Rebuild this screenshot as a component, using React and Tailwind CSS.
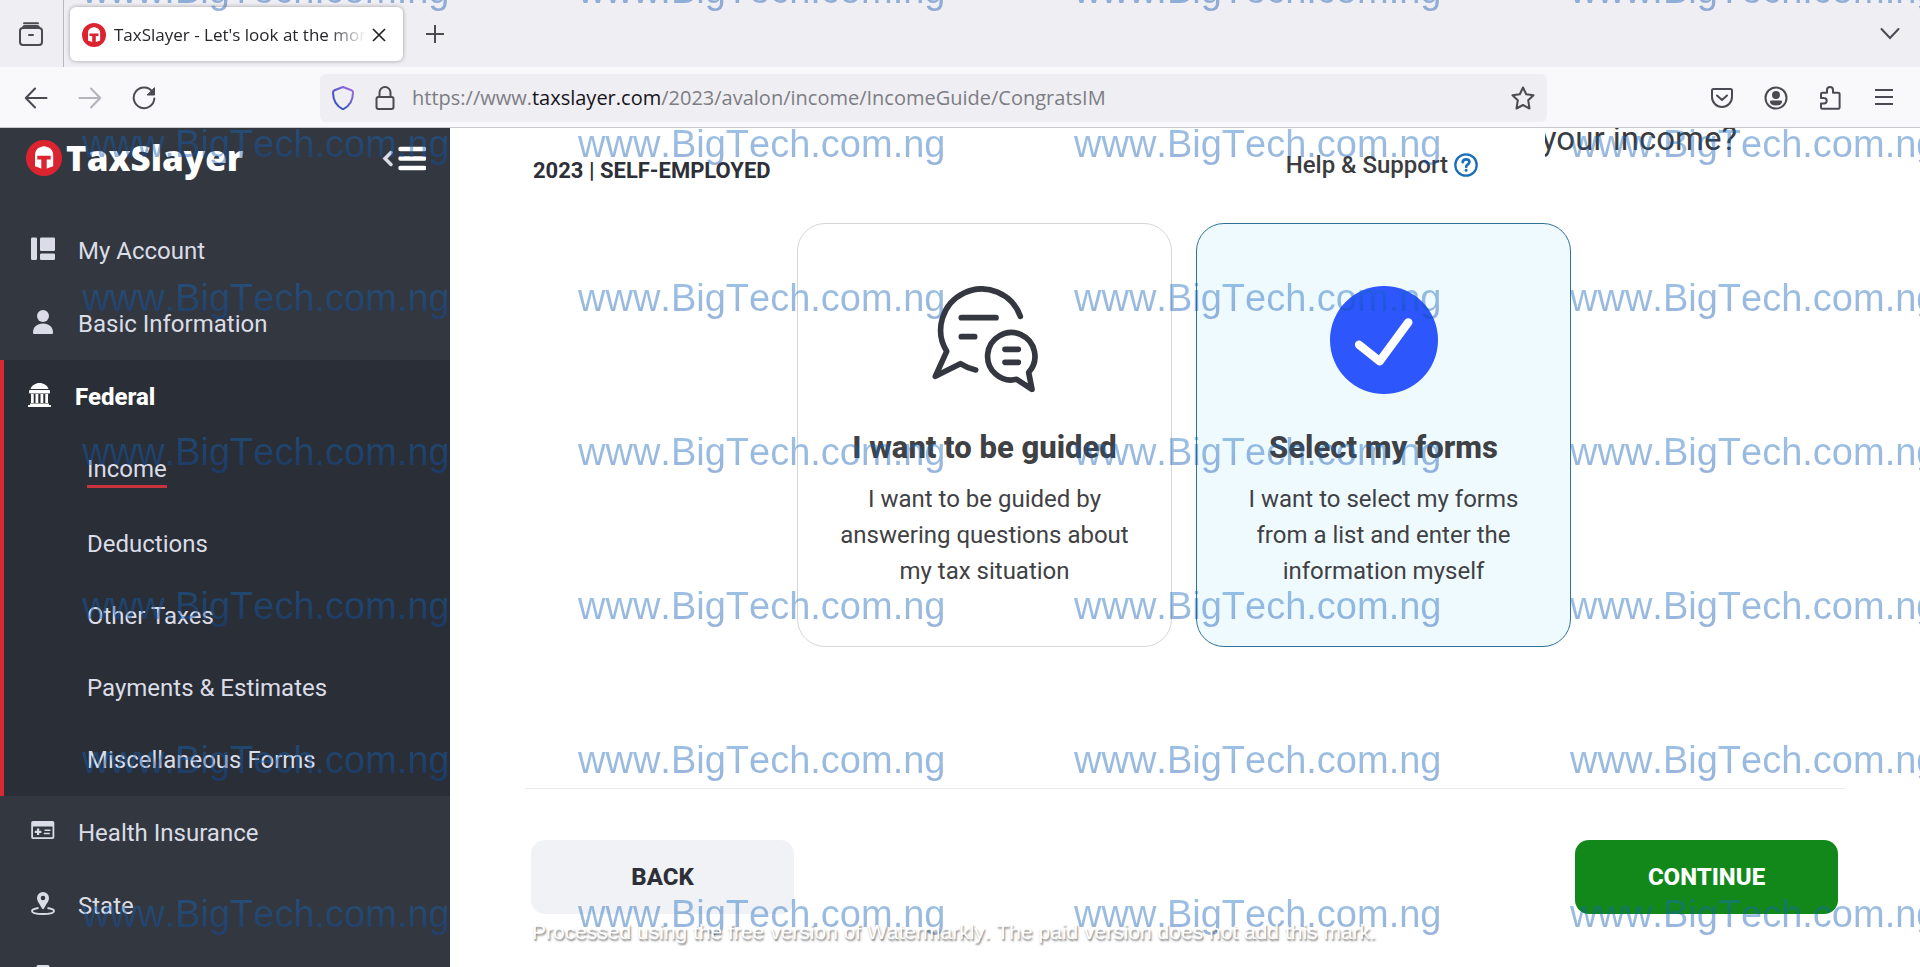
import React from "react";

function Helmet({ className }) {
  return (
    <svg viewBox="0 0 36 36" className={className} aria-hidden="true">
      <circle cx="18" cy="18" r="18" fill="#dc2330" />
      <path d="M9 15C9 11 11 8.500 13.500 7.500L18 6l4.500 1.500C25 8.500 27.200 11 27.200 15v11.300L18 29.500l-9-3.200z" fill="#fff" />
      <path d="M11.300 15.700h13.400v3.700h-4v10.600h-5.400V19.400h-4z" fill="#dc2330" />
    </svg>
  );
}

function Line({ stroke = "#4a4a52", children }) {
  return (
    <svg
      viewBox="0 0 24 24"
      className="size-6"
      fill="none"
      stroke={stroke}
      strokeWidth="2"
      strokeLinecap="round"
      strokeLinejoin="round"
      aria-hidden="true"
    >
      {children}
    </svg>
  );
}

function TabStrip() {
  return (
    <div className="flex h-[67px] shrink-0 items-stretch bg-[#efeef3]">
      <button aria-label="Recent tabs" className="flex w-[63px] items-center justify-center pr-0.5">
        <Line>
          <path d="M5 1.200h14" />
          <rect x="1" y="6" width="22" height="17" rx="3" />
          <path d="M4 6c0-1.500.5-2 2-2h12c1.500 0 2 .5 2 2M10 13h4" />
        </Line>
      </button>
      <div className="w-px bg-[#b9b8be]" />
      <div className="mt-[7px] mb-[6px] ml-[6px] flex w-[333px] items-center rounded-md bg-white pt-px pr-[17px] pl-3 shadow-[0_0_4px_rgba(0,0,0,0.35)]">
        <Helmet className="size-6 shrink-0" />
        <span className="ml-2 flex-1 overflow-hidden text-[17px] whitespace-nowrap text-[#26262b] [mask-image:linear-gradient(to_right,black_85%,transparent)]">
          TaxSlayer - Let&apos;s look at the money
        </span>
        <button aria-label="Close tab" className="ml-1.5">
          <svg viewBox="0 0 14 14" className="size-[14px]" stroke="#222" strokeWidth="1.700" aria-hidden="true">
            <path d="M1 1l12 12M13 1L1 13" />
          </svg>
        </button>
      </div>
      <button aria-label="New tab" className="ml-[22px]">
        <svg viewBox="0 0 20 20" className="size-5" stroke="#4a4a52" strokeWidth="2" aria-hidden="true">
          <path d="M10 1v18M1 10h18" />
        </svg>
      </button>
      <button aria-label="List all tabs" className="mr-5 ml-auto">
        <svg viewBox="0 0 20 20" className="size-5" fill="none" stroke="#4a4a52" strokeWidth="2" strokeLinecap="round" aria-hidden="true">
          <path d="M1.500 5l8.500 9 8.500-9" />
        </svg>
      </button>
    </div>
  );
}

function Toolbar() {
  return (
    <div className="flex h-[61px] shrink-0 items-center border-b border-[#c9c9cd] bg-[#f9f9fb] pt-0.5">
      <div className="flex w-[320px] items-center gap-[30px] pl-6">
        <button aria-label="Back">
          <Line><path d="M22.500 12H2M11 2.500L1.800 12l9.200 9.500" /></Line>
        </button>
        <button aria-label="Forward">
          <Line stroke="#b4b4ba"><path d="M1.500 12H22M13 2.500L22.200 12 13 21.500" /></Line>
        </button>
        <button aria-label="Reload">
          <Line>
            <path d="M20.500 6A10.300 10.300 0 1 0 22.300 12.500" />
            <path d="M22.500 2v7h-7z" fill="#4a4a52" strokeWidth="1" />
          </Line>
        </button>
      </div>
      <div className="flex h-12 flex-1 items-center rounded-md bg-[#efeef2] pr-3 pl-[11px]">
        <button aria-label="Tracking protection">
          <svg viewBox="0 0 24 24" className="size-6" fill="none" aria-hidden="true">
            <defs>
              <linearGradient id="shield" x1="0" y1="1" x2="1" y2="0">
                <stop offset="0.300" stopColor="#3e55c4" />
                <stop offset="1" stopColor="#a56be0" />
              </linearGradient>
            </defs>
            <path d="M12 1l8.500 3.200c1 .4 1.500 1 1.500 2C22 13.500 18.500 20 12 23.300 5.500 20 2 13.500 2 6.200c0-1 .5-1.600 1.500-2z" stroke="url(#shield)" strokeWidth="2" strokeLinejoin="round" />
          </svg>
        </button>
        <button aria-label="Site information" className="ml-[18px]">
          <Line>
            <rect x="3.500" y="11" width="17" height="12" rx="2" />
            <path d="M6.500 11V6.500a5.500 5.500 0 0 1 11 0V11" />
          </Line>
        </button>
        <div className="ml-[15px] flex-1 overflow-hidden text-[20px] whitespace-nowrap text-[#7d7d84]">
          https://www.<span className="text-[#15141a]">taxslayer.com</span>/2023/avalon/income/IncomeGuide/CongratsIM
        </div>
        <button aria-label="Bookmark this page">
          <Line>
            <path d="M12 1.500l3.200 6.700 7.300 1-5.300 5.100 1.300 8.200L12 19l-6.500 3.500 1.300-8.200L1.500 9.200l7.300-1z" />
          </Line>
        </button>
      </div>
      <div className="flex w-[373px] items-center justify-end gap-[30px] pr-6">
        <button aria-label="Save to Pocket">
          <Line>
            <path d="M3.500 3h17A1.500 1.500 0 0 1 22 4.500V11a10 10 0 0 1-20 0V4.500A1.500 1.500 0 0 1 3.500 3zM7 9.500l5 4.500 5-4.500" />
          </Line>
        </button>
        <button aria-label="Account">
          <Line>
            <circle cx="12" cy="12" r="10.500" />
            <circle cx="12" cy="9" r="3" fill="#4a4a52" />
            <path d="M7 15.500h10c0 2-2 3-5 3s-5-1-5-3z" fill="#4a4a52" />
          </Line>
        </button>
        <button aria-label="Extensions">
          <Line>
            <path d="M3 12V8a1.300 1.300 0 0 1 1.300-1.300H9V4a3 3 0 0 1 6 0v2.700h5.300A1.300 1.300 0 0 1 21.600 8v13.500a1.300 1.300 0 0 1-1.300 1.300H4.300A1.300 1.300 0 0 1 3 21.500V17.500h3a2.700 2.700 0 0 0 0-5.400z" />
          </Line>
        </button>
        <button aria-label="Open menu">
          <svg viewBox="0 0 24 24" className="size-6" stroke="#4a4a52" strokeWidth="2" aria-hidden="true">
            <path d="M3 4h18M3 11h18M3 18h18" />
          </svg>
        </button>
      </div>
    </div>
  );
}

const icons = {
  account: (
    <svg viewBox="0 0 24 24" className="size-6" fill="currentColor" aria-hidden="true">
      <rect x="0" y="0.500" width="6" height="22.500" rx="1.200" />
      <rect x="9" y="0.500" width="15" height="13.500" rx="1.200" />
      <rect x="9" y="16.500" width="15" height="6.500" rx="1.200" />
    </svg>
  ),
  person: (
    <svg viewBox="0 0 24 24" className="size-6" fill="currentColor" aria-hidden="true">
      <circle cx="12" cy="6" r="6" />
      <path d="M2 22.500C2 17 6 13.500 12 13.500S22 17 22 22.500c0 1-.5 1.500-1.500 1.500h-17C2.500 24 2 23.500 2 22.500z" />
    </svg>
  ),
  federal: (
    <svg viewBox="0 0 24 24" className="size-6" fill="currentColor" aria-hidden="true">
      <path d="M2.500 6C3.500 2.500 7.500 0 11.500 0s8 2.500 9 6z" />
      <rect x="1" y="7" width="21" height="3.500" rx="1" />
      <path d="M3 11h2.700v9H3zM7.500 11h2.800v9H7.500zM12.500 11h2.800v9h-2.800zM17.300 11H20v9h-2.700zM2 20.500h19v1.500H2zM0 22h23v2H0z" />
    </svg>
  ),
  health: (
    <svg viewBox="0 0 24 24" className="size-6" fill="currentColor" aria-hidden="true">
      <path fillRule="evenodd" d="M2 2h19.500A1.800 1.800 0 0 1 23.300 3.800v14.400a1.800 1.800 0 0 1-1.800 1.800H2a1.800 1.800 0 0 1-1.800-1.800V3.800A1.800 1.800 0 0 1 2 2zm0 5.500v10.700h19.500V7.500z" />
      <path d="M6 9.500h2.200v2.200h2.200v2.200H8.200v2.200H6v-2.200H3.800v-2.200H6zM13.500 10.500h6V12h-6zM12.800 13.800h6v1.500h-6z" />
    </svg>
  ),
  state: (
    <svg viewBox="0 0 24 24" className="size-6" fill="currentColor" aria-hidden="true">
      <path fillRule="evenodd" d="M12 0a6 6 0 0 1 6 6c0 3.500-3.500 7-5 10.500q-1 1.500-2 0C9.500 13 6 9.500 6 6a6 6 0 0 1 6-6zm0 3.700a2.300 2.300 0 1 0 0 4.600 2.300 2.300 0 0 0 0-4.600z" />
      <path d="M7.500 16C4 16.500 1 17.500 1 19c0 2 5 3 11 3s11-1 11-3c0-1.500-3-2.500-6.500-3" fill="none" stroke="currentColor" strokeWidth="1.900" />
    </svg>
  ),
  summary: (
    <svg viewBox="0 0 24 24" className="size-6" fill="currentColor" aria-hidden="true">
      <path d="M7 0h10a1.500 1.500 0 0 1 1.500 1.500V3H20a2 2 0 0 1 2 2v17a2 2 0 0 1-2 2H4a2 2 0 0 1-2-2V5a2 2 0 0 1 2-2h1.500V1.500A1.500 1.500 0 0 1 7 0z" />
    </svg>
  ),
};

function NavItem({ icon, label, children }) {
  return (
    <a href="#" aria-label={label} className="flex h-[73px] shrink-0 items-center gap-[23px] pl-[31px]">
      <span className="-mt-1 size-6">{icons[icon]}</span>
      {children}
    </a>
  );
}

function Sidebar() {
  return (
    <nav className="flex w-[450px] shrink-0 flex-col overflow-hidden bg-[#33373f] text-[24px] text-[#dadde7]">
      <div className="flex h-[86px] shrink-0 items-start justify-between pt-2 pr-6 pl-[26px]">
        <a href="#" className="flex items-center gap-1 font-['Open_Sans',sans-serif] text-[35px] leading-[44px] font-extrabold text-white">
          <Helmet className="size-9" />
          <span>TaxSlayer</span>
        </a>
        <button aria-label="Collapse menu" className="mt-2">
          <svg viewBox="0 0 44 28" className="h-7 w-11" fill="none" stroke="#fff" strokeLinecap="round" aria-hidden="true">
            <path d="M9 8.500l-6 6 6 6" stroke="#dadde7" strokeWidth="3.500" />
            <path d="M18.500 5h24M18.500 14.500h24M18.500 24h24" strokeWidth="4.500" />
          </svg>
        </button>
      </div>
      <NavItem icon="account">My Account</NavItem>
      <NavItem icon="person">Basic Information</NavItem>
      <div className="shrink-0 border-l-4 border-[#d62a35] bg-[#2a2e36]">
        <a href="#" className="flex h-[73px] items-center gap-[23px] pl-6 font-extrabold text-white">
          <span className="-mt-1 size-6">{icons.federal}</span>
          Federal
        </a>
        <a href="#" className="flex h-[75px] items-center pl-[83px]">
          <span className="border-b-[3px] border-[#c8323c] leading-8">Income</span>
        </a>
        <a href="#" className="flex h-[72px] items-center pl-[83px]">Deductions</a>
        <a href="#" className="flex h-[72px] items-center pl-[83px]">Other Taxes</a>
        <a href="#" className="flex h-[72px] items-center pl-[83px]">Payments &amp; Estimates</a>
        <a href="#" className="flex h-[72px] items-center pl-[83px]">Miscellaneous Forms</a>
      </div>
      <NavItem icon="health">Health Insurance</NavItem>
      <NavItem icon="state">State</NavItem>
      <NavItem icon="summary" label="Summary" />
    </nav>
  );
}

function ChatIcon() {
  return (
    <svg viewBox="453 228 324 324" className="size-[108px]" fill="none" stroke="#343740" strokeWidth="17" strokeLinecap="round" strokeLinejoin="round" aria-hidden="true">
      <path d="M721 319A123 123 0 1 0 500 424L466 499L541 461Q563 475 587 480" />
      <path d="M544 323H648M544 380H584M675 418H715M675 457H715" />
      <path d="M710 508A71 71 0 1 1 746 487L756 538Z" />
    </svg>
  );
}

function CheckIcon() {
  return (
    <svg viewBox="0 0 324 324" className="size-[108px]" fill="none" aria-hidden="true">
      <circle cx="162" cy="162" r="162" fill="#2e56fd" />
      <path d="M87 176L149 226L235 109" stroke="#fff" strokeWidth="25" strokeLinecap="round" strokeLinejoin="round" />
    </svg>
  );
}

function ChoiceCard({ selected, icon, title, children }) {
  return (
    <button
      aria-pressed={selected}
      className={
        "flex w-[375px] flex-col items-center rounded-[28px] border px-8 pt-[62px] pb-[57px] text-center text-[#3f4144] " +
        (selected ? "border-[#2f7396] bg-[#effaff]" : "border-[#d5d6da] bg-white")
      }
    >
      {icon}
      <span className="mt-9 text-[31px] leading-9 font-extrabold whitespace-nowrap">{title}</span>
      <span className="mt-[15px] text-[24px] leading-9">{children}</span>
    </button>
  );
}

function Content() {
  return (
    <main className="flex flex-1 flex-col overflow-hidden bg-white text-[#3a3c40]">
      <div className="flex h-[95px] shrink-0">
        <div className="flex flex-1 justify-between pl-[83px]">
          <p className="pt-[27px] text-[22px] leading-8 font-bold text-[#2d3038]">2023 | SELF-EMPLOYED</p>
          <a href="#" className="mt-[19px] flex h-9 items-center gap-1.5 pr-[67px] text-[24px] font-medium">
            Help &amp; Support
            <svg viewBox="0 0 24 24" className="size-6" fill="none" stroke="#1b6fb8" strokeLinecap="round" aria-hidden="true">
              <circle cx="12" cy="12" r="10.700" strokeWidth="2.300" />
              <path d="M8.700 9.200c.2-1.900 1.500-2.900 3.300-2.900 2 0 3.400 1.100 3.400 2.800 0 2.200-3.200 2.300-3.200 4.700" strokeWidth="2.700" />
              <circle cx="12.100" cy="17.300" r="0.700" strokeWidth="1.700" />
            </svg>
          </a>
        </div>
        <div className="w-[375px] overflow-hidden">
          <h1 className="-mt-[9px] -ml-1 text-[33px] leading-10 whitespace-nowrap text-[#3a3c40]">your income?</h1>
        </div>
      </div>
      <div className="flex justify-center gap-6 pr-0.5">
        <ChoiceCard icon={<ChatIcon />} selected={false} title="I want to be guided">
          I want to be guided by answering questions about my tax situation
        </ChoiceCard>
        <ChoiceCard icon={<CheckIcon />} selected title="Select my forms">
          I want to select my forms from a list and enter the information myself
        </ChoiceCard>
      </div>
      <div className="mx-[75px] mt-[141px] flex justify-between border-t border-[#ebebed] pt-[51px] pr-[7px] pl-1.5 text-[24px] font-extrabold">
        <button className="h-[74px] w-[263px] rounded-[14px] bg-[#f1f2f6] text-[#2d3038]">BACK</button>
        <button className="h-[74px] w-[263px] rounded-[14px] bg-[#12881b] text-white">CONTINUE</button>
      </div>
    </main>
  );
}

function Watermark() {
  return (
    <div className="pointer-events-none absolute inset-0 overflow-hidden font-['Liberation_Sans',Arial,sans-serif] [font-kerning:none]">
      <div className="-mt-8 ml-[82px] grid grid-cols-[repeat(4,496px)] auto-rows-[154px] text-[38px] leading-[44px] opacity-[0.42]">
        {Array.from({ length: 28 }, (_, i) => (
          <span key={i} className="h-[46px] justify-self-start bg-linear-to-b from-[#1874c6] to-[#0c49a8] bg-clip-text text-transparent">
            www.BigTech.com.ng
          </span>
        ))}
      </div>
      <p className="absolute bottom-[21px] left-[532px] text-[21px] leading-7 whitespace-nowrap text-white [text-shadow:1px_2px_2px_rgba(0,0,0,0.5)]">
        Processed using the free version of Watermarkly. The paid version does not add this mark.
      </p>
    </div>
  );
}

export default function App() {
  return (
    <div className="relative flex h-screen flex-col overflow-hidden bg-white font-['Roboto',sans-serif]">
      <div className="font-['Segoe_UI','Open_Sans',sans-serif]">
        <TabStrip />
        <Toolbar />
      </div>
      <div className="flex min-h-0 flex-1">
        <Sidebar />
        <Content />
      </div>
      <Watermark />
    </div>
  );
}
